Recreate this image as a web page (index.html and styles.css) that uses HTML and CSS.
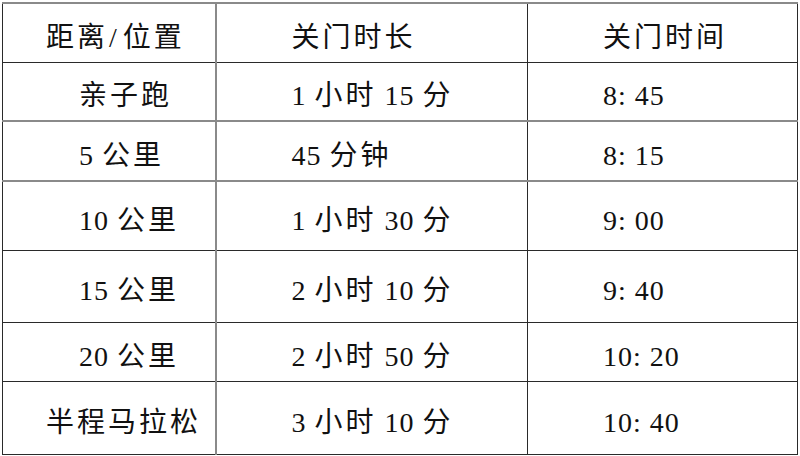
FILE: index.html
```html
<!DOCTYPE html>
<html lang="zh-CN">
<head>
<meta charset="utf-8">
<title>关门时间</title>
<link rel="stylesheet" href="styles.css">
</head>
<body>
<table class="cutoff">
  <colgroup>
    <col class="c1"><col class="c2"><col class="c3">
  </colgroup>
  <tr class="r-head"><td class="wide">距离<span class="sl">/</span>位置</td><td>关门时长</td><td>关门时间</td></tr>
  <tr class="r-a gray"><td class="ind">亲子跑</td><td><span class="num">1 </span>小时<span class="num"> 15 </span>分</td><td><span class="num">8: 45</span></td></tr>
  <tr class="r-b gray"><td class="ind"><span class="num">5 </span>公里</td><td><span class="num">45 </span>分钟</td><td><span class="num">8: 15</span></td></tr>
  <tr class="r-c"><td class="ind"><span class="num">10 </span>公里</td><td><span class="num">1 </span>小时<span class="num"> 30 </span>分</td><td><span class="num">9: 00</span></td></tr>
  <tr class="r-d"><td class="ind"><span class="num">15 </span>公里</td><td><span class="num">2 </span>小时<span class="num"> 10 </span>分</td><td><span class="num">9: 40</span></td></tr>
  <tr class="r-e"><td class="ind"><span class="num">20 </span>公里</td><td><span class="num">2 </span>小时<span class="num"> 50 </span>分</td><td><span class="num">10: 20</span></td></tr>
  <tr class="r-f"><td class="wide">半程马拉松</td><td><span class="num">3 </span>小时<span class="num"> 10 </span>分</td><td><span class="num">10: 40</span></td></tr>
</table>
</body>
</html>
```
FILE: styles.css
```css
html, body {
  margin: 0;
  padding: 0;
  background: #ffffff;
}
body {
  padding: 2px 0 0 2px;
  width: 800px;
  height: 456px;
  box-sizing: border-box;
  overflow: hidden;
}
.cutoff {
  border-collapse: collapse;
  table-layout: fixed;
  width: 795px;
  font-family: "Liberation Serif", "Noto Sans CJK SC", serif;
  font-size: 28px;
  letter-spacing: 3px;
  color: #111;
}
.c1 { width: 213px; }
.c2 { width: 312px; }
.c3 { width: 270px; }
.cutoff td {
  border: 1px solid #2a2a2a;
  padding: 10px 0 0 75px;
  vertical-align: middle;
  line-height: 1;
  white-space: nowrap;
}
.cutoff .num {
  letter-spacing: 1px;
}
.cutoff .sl {
  padding: 0 3px 0 1px;
}
.cutoff tr:first-child td { border-top: 2px solid #8a8a8a; }
.cutoff td:first-child { border-right: 2px solid #8a8a8a; }
.cutoff td.wide { padding-left: 43px; }
.cutoff td.ind { padding-left: 76px; }
.cutoff tr.gray td { border-bottom: 2px solid #8a8a8a; }
.r-head { height: 59px; }
.r-a { height: 59px; }
.r-b { height: 60px; }
.r-c { height: 69px; }
.r-d { height: 72px; }
.r-e { height: 59px; }
.r-f { height: 73px; }
```
